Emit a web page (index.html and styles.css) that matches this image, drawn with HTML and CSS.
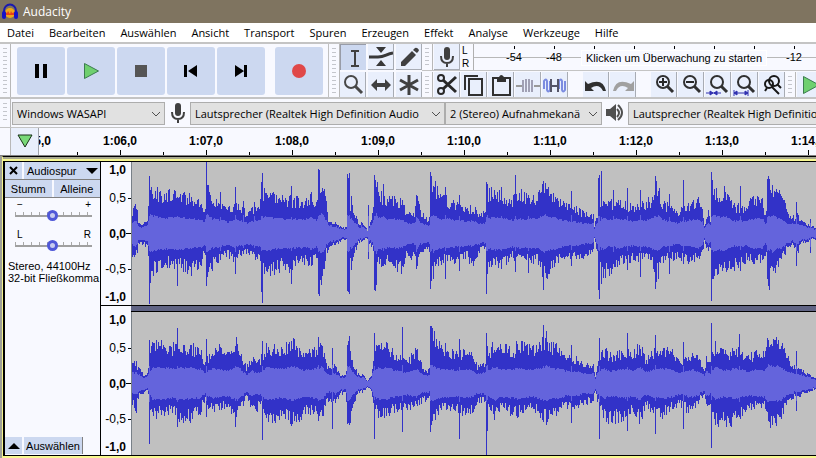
FILE: index.html
```html
<!DOCTYPE html>
<html lang="de">
<head>
<meta charset="utf-8">
<title>Audacity</title>
<link rel="stylesheet" href="styles.css">
</head>
<body>
<header class="titlebar">
  <svg class="logo" width="18" height="18" viewBox="0 0 18 18"><circle cx="9" cy="10" r="5" fill="#f0a818"/><path d="M4 9l2 1 1-2 2 3 1-3 1 2 3-1v3H4z" fill="#e8401c"/><path d="M3 11V8a6 6.500 0 0 1 12 0v3" fill="none" stroke="#1a1ab0" stroke-width="2"/><rect x="1" y="8" width="4" height="8" rx="2" fill="#1515c8"/><rect x="13" y="8" width="4" height="8" rx="2" fill="#1515c8"/></svg>
  <span>Audacity</span>
</header>
<nav class="menu">
  <a href="#">Datei</a><a href="#">Bearbeiten</a><a href="#">Auswählen</a><a href="#">Ansicht</a><a href="#">Transport</a><a href="#">Spuren</a><a href="#">Erzeugen</a><a href="#">Effekt</a><a href="#">Analyse</a><a href="#">Werkzeuge</a><a href="#">Hilfe</a>
</nav>
<section class="toolbars">
  <div class="grip"></div>
  <div class="transport">
    <button aria-label="Pause"><svg width="48" height="48"><path d="M18 17h4v14h-4zM26 17h4v14h-4z"/></svg></button>
    <button aria-label="Wiedergabe"><svg width="48" height="48"><path d="M17.500 16.500v15l14-7.500z" fill="#6fd06f" stroke="#3c7c50"/></svg></button>
    <button aria-label="Stopp"><svg width="48" height="48"><path d="M18 18h12v12H18z" fill="#555"/></svg></button>
    <button aria-label="Anfang"><svg width="48" height="48"><path d="M17 18h3v12h-3zM30 18v12l-9-6z"/></svg></button>
    <button aria-label="Ende"><svg width="48" height="48"><path d="M27 18h3v12h-3zM18 18v12l9-6z"/></svg></button>
    <button class="record" aria-label="Aufnahme"><svg width="48" height="48"><circle cx="24" cy="24" r="7" fill="#e04848"/></svg></button>
  </div>
  <div class="grip"></div>
  <div class="tools">
    <button class="active" aria-label="Auswahl"><svg width="26" height="26"><path d="M10 6h8M10 21h8M14 6v15" fill="none" stroke="#404040" stroke-width="2"/></svg></button>
    <button aria-label="Hüllkurve"><svg width="26" height="26"><path d="M1 13h9c7 0 8-3 15-4" fill="none" stroke="#383838" stroke-width="3"/><path d="M8 3h10l-5 6zM8 22h10l-5-6z" fill="#383838"/></svg></button>
    <button aria-label="Zeichnen"><svg width="26" height="26"><path d="M5 18L16 7l4 4L9 22H5zM17 6l2-2q2-1 4 2 0 1-2 3z" fill="#404040"/></svg></button>
    <button aria-label="Zoom"><svg width="26" height="26"><circle cx="11" cy="10" r="6" fill="none" stroke="#484848" stroke-width="2"/><path d="M15 14l7 7" stroke="#484848" stroke-width="3"/></svg></button>
    <button aria-label="Verschieben"><svg width="26" height="26"><path d="M3 13l6-6v4h8V7l6 6-6 6v-4H9v4z" fill="#404040"/></svg></button>
    <button aria-label="Multi"><svg width="26" height="26"><path d="M13 3v20M4 8l18 10M22 8L4 18" stroke="#404040" stroke-width="3"/></svg></button>
  </div>
  <div class="stack">
    <div class="line meterline">
      <div class="grip"></div>
      <button class="sm" aria-label="Aufnahmepegel"><svg width="26" height="26"><use href="#mic"/></svg></button>
      <div class="lr"><span>L</span><span>R</span></div>
      <div class="meter">
        <div class="db tick"><span>-54</span></div><div class="db tick"><span>-48</span></div><div class="db tick"></div><div class="db tick"></div><div class="db tick"></div><div class="db tick"></div><div class="db tick"></div><div class="db tick"><span>-12</span></div><div class="db tick"></div>
        <span class="hint">Klicken um Überwachung zu starten</span>
      </div>
    </div>
    <div class="line editline">
      <div class="grip"></div>
      <div class="group">
      <button class="sm" aria-label="Ausschneiden"><svg width="26" height="26"><g fill="none" stroke="#282828"><circle cx="7" cy="6" r="3" stroke-width="2"/><circle cx="7" cy="19" r="3" stroke-width="2"/><path d="M9 8l13 12M9 17L22 5" stroke-width="3"/></g></svg></button>
      <button class="sm" aria-label="Kopieren"><svg width="26" height="26"><path d="M4 18V4h13M8 7h13v16H8z" fill="none" stroke="#303030" stroke-width="2"/></svg></button>
      <button class="sm" aria-label="Einfügen"><svg width="26" height="26"><path d="M5 6h17v17H5z" fill="none" stroke="#303030" stroke-width="2"/><path d="M9 5h2q2-4 5 0h2v5H9z" fill="#303030"/></svg></button>
      <button class="sm" aria-label="Zuschneiden"><svg width="26" height="26"><path d="M1 14h7M19 14h6" stroke="#999" stroke-width="2"/><path d="M8 8v12M11 7v13M14 7v13M17 8v12" stroke="#a0a0b4" stroke-width="2"/></svg></button>
      <button class="sm" aria-label="Stille"><svg width="26" height="26"><path d="M2 17V9q2-3 3 0v9q1 3 3 0V9M17 17V9q2-3 3 0v9q1 3 3 0V9" fill="none" stroke="#7c8ce0" stroke-width="2"/><path d="M9 14h7M9 7v13M16 7v13" stroke="#555568" stroke-width="2"/></svg></button>
      </div>
      <div class="group">
      <button class="sm" aria-label="Rückgängig"><svg width="26" height="26"><path d="M2 9v10h9l-3-3q8-5 12 3h3Q20 5 5 12z" fill="#303030"/></svg></button>
      <button class="sm" aria-label="Wiederholen"><svg width="26" height="26"><path d="M24 9v10h-9l3-3Q10 11 6 19H3Q6 5 21 12z" fill="#a0a0a0"/></svg></button>
      </div>
      <div class="group">
      <button class="sm" aria-label="Vergrößern"><svg width="26" height="26"><use href="#lens"/><path d="M8 10h8M12 6v8" stroke="#282828" stroke-width="2"/></svg></button>
      <button class="sm" aria-label="Verkleinern"><svg width="26" height="26"><use href="#lens"/><path d="M8 10h8" stroke="#282828" stroke-width="2"/></svg></button>
      <button class="sm" aria-label="Auswahl einpassen"><svg width="26" height="26"><use href="#lens"/><path d="M1 21h15M5 19l3 2-3 2zM12 19l-3 2 3 2z" fill="#3030b0" stroke="#3030b0"/></svg></button>
      <button class="sm" aria-label="Projekt einpassen"><svg width="26" height="26"><use href="#lens"/><path d="M2 21h14M2 18v6M16 18v6M5 19l-3 2 3 2zM13 19l3 2-3 2z" fill="#3030b0" stroke="#3030b0"/></svg></button>
      <button class="sm" aria-label="Zoom umschalten"><svg width="26" height="26"><g fill="none" stroke="#181818" stroke-width="2"><circle cx="15" cy="9" r="5"/><circle cx="10" cy="12" r="4"/><path d="M18 12l4 4M13 15l7 7M8 16l-2 3"/></g></svg></button>
      </div>
      <div class="grip"></div>
      <button class="sm" aria-label="Abspielen"><svg width="26" height="26"><path d="M6.500 4.500v17L22 13z" fill="#6fd06f" stroke="#3c7c50"/></svg></button>
    </div>
  </div>
</section>
<section class="devices">
  <div class="grip"></div>
  <div class="pick host"><select aria-label="Audio-Host"><option>Windows WASAPI</option></select><svg width="10" height="6"><path d="M1 1l4 4 4-4"/></svg></div>
  <svg class="dev" width="26" height="26"><use href="#mic"/></svg>
  <div class="pick input"><select aria-label="Aufnahmegerät"><option>Lautsprecher (Realtek High Definition Audio</option></select><svg width="10" height="6"><path d="M1 1l4 4 4-4"/></svg></div>
  <div class="pick chans"><select aria-label="Aufnahmekanäle"><option>2 (Stereo) Aufnahmekanä</option></select><svg width="10" height="6"><path d="M1 1l4 4 4-4"/></svg></div>
  <svg class="dev" width="26" height="26"><path d="M4 9h4l6-5v17l-6-5H4z" fill="#505050"/><path d="M15 9q4 4 0 8M16 5q8 8 0 15" fill="none" stroke="#505050" stroke-width="2"/></svg>
  <div class="pick output"><select aria-label="Wiedergabegerät"><option>Lautsprecher (Realtek High Definition Audio)</option></select></div>
</section>
<section class="timeline">
  <div class="gutter"></div>
  <button class="pin" aria-label="Abspielkopf"><svg width="16" height="14"><path d="M1 1h14L8 13z" fill="#78d878" stroke="#183018"/></svg></button>
  <div class="scale"><div class="marks">
    <span>1:05,0</span><span>1:06,0</span><span>1:07,0</span><span>1:08,0</span><span>1:09,0</span><span>1:10,0</span><span>1:11,0</span><span>1:12,0</span><span>1:13,0</span><span>1:14,0</span>
  </div></div>
</section>
<main class="tracks">
  <aside class="panel">
    <div class="row"><button class="close" aria-label="Schließen"><svg width="9" height="9"><path d="M1 1l7 7M8 1L1 8" stroke="#000" stroke-width="2"/></svg></button><button class="name">Audiospur<svg width="12" height="6"><path d="M0 0h12L6 6z"/></svg></button></div>
    <div class="row"><button class="half">Stumm</button><button class="half">Alleine</button></div>
    <div class="slide"><div class="ends"><span>−</span><span>+</span></div><input type="range" aria-label="Lautstärke" value="49"></div>
    <div class="slide"><div class="ends"><span>L</span><span>R</span></div><input type="range" aria-label="Balance" value="49"></div>
    <p class="info">Stereo, 44100Hz<br>32-bit Fließkomma</p>
    <div class="row foot"><button class="close" aria-label="Einklappen"><svg width="12" height="6"><path d="M0 6h12L6 0z"/></svg></button><button class="choose">Auswählen</button></div>
  </aside>
  <div class="channels">
    <div class="channel">
      <div class="vr"><b>1,0</b><span>0,5</span><b>0,0</b><span>-0,5</span><b>-1,0</b></div>
      <svg class="wave" id="left"></svg>
    </div>
    <div class="divider"><i></i></div>
    <div class="channel">
      <div class="vr"><b>1,0</b><span>0,5</span><b>0,0</b><span>-0,5</span><b>-1,0</b></div>
      <svg class="wave" id="right"></svg>
    </div>
  </div>
</main>
<svg class="defs" width="0" height="0">
  <defs>
    <g id="mic"><rect x="10" y="3" width="6" height="13" rx="3" fill="#404040"/><path d="M7 12q0 7 6 7t6-7M13 19v4" fill="none" stroke="#404040" stroke-width="2"/></g>
    <g id="lens" fill="none" stroke="#303030"><circle cx="12" cy="10" r="6" stroke-width="2"/><path d="M16 14l6 6" stroke-width="3"/></g>
  </defs>
</svg>
<script src="wave.js"></script>
</body>
</html>
```
FILE: styles.css
```css
* { box-sizing: border-box; }
body { margin: 0; height: 100vh; overflow: hidden; display: flex; flex-direction: column; background: #f8f9ff; color: #000; font: 12px "Open Sans", sans-serif; }
button { border: 0; padding: 0; margin: 0; background: #ccd8f0; font: inherit; color: inherit; display: flex; align-items: center; justify-content: center; flex: none; }
svg { display: block; flex: none; }
.defs { position: absolute; }

.titlebar { height: 23px; flex: none; background: #7f7460; color: #fff; display: flex; align-items: center; gap: 4px; padding-left: 1px; }
.menu { height: 19px; flex: none; background: #fff; display: flex; align-items: center; gap: 15px; padding-left: 7px; font-size: 11px; }
.menu a { color: #000; text-decoration: none; }

.toolbars { height: 57px; flex: none; display: flex; border-top: 2px solid #c4c4c4; border-bottom: 2px solid #c4c4c4; overflow: hidden; }
.grip { width: 11px; flex: none; border-right: 1px solid #b8b8b8; padding: 4px 3px; background: repeating-linear-gradient(#c4c6cc 0 1px, transparent 1px 4px) content-box; }
.transport { display: flex; gap: 2px; padding: 3px 5px 0 6px; border-right: 1px solid #c0c0c0; flex: none; }
.transport button { width: 48px; height: 48px; border-radius: 3px; }
.transport .record { margin-left: 8px; }
.tools { display: grid; grid-template-columns: repeat(3, 26px); grid-auto-rows: 26px; gap: 2px; flex: none; }
.tools button, .sm { background: #e9effc; border-right: 1px solid #a8acb4; border-bottom: 1px solid #a8acb4; height: 26px; overflow: hidden; }
.tools .active { background: #ccd8f0; border: 1px solid #989ca8; border-right: 0; border-bottom: 0; }
.stack { flex: 1; min-width: 0; display: flex; flex-direction: column; gap: 1px; }
.line { display: flex; height: 27px; min-width: 0; }
.line > .sm, .group { margin-left: 1px; }
.sm { width: 26px; }
.group { display: flex; gap: 1px; }
.group + .group { margin-left: 15px; }
.meterline { border-bottom: 1px solid #c4c4c4; }
.lr { width: 11px; margin-left: 2px; display: flex; flex-direction: column; font: 10px/13px "Liberation Sans", sans-serif; }
.meter { position: relative; flex: 1; min-width: 0; overflow: hidden; display: flex; padding-left: 20px; border-left: 1px solid #b0b0b0; background: linear-gradient(transparent 13px, #b8b8b8 13px 14px, transparent 14px); font: 11px/14px "Liberation Sans", sans-serif; }
.db { width: 40px; flex: none; display: flex; justify-content: center; padding-top: 6px; background: linear-gradient(#000, #000) center 2px / 1px 3px no-repeat; }
.db span { height: 14px; }
.hint { position: absolute; left: 107px; top: 6px; padding: 0 4px; background: #f8f9ff; border: 1px solid #fff; white-space: nowrap; line-height: 14px; }

.devices { height: 29px; flex: none; display: flex; align-items: center; border-bottom: 1px solid #c4c4c4; overflow: hidden; font-size: 11px; }
.devices .grip { height: 28px; }
.pick { position: relative; flex: none; margin-left: 1px; }
.pick select { appearance: none; width: 100%; height: 23px; margin: 0; padding: 0 0 0 4px; border: 1px solid #adadad; border-radius: 0; background: #e1e1e1; color: #000; font: inherit; display: block; }
.pick svg { position: absolute; right: 4px; top: 9px; fill: none; stroke: #505050; pointer-events: none; }
.host { width: 153px; }
.input { width: 255px; margin-left: 0; }
.chans { width: 157px; margin-left: 0; }
.output { flex: 1 0 250px; }
.dev { margin: 0 -1px 0 0; }

.timeline { height: 28px; flex: none; display: flex; border-bottom: 1px solid #808080; }
.gutter { width: 11px; border-right: 1px solid #b8b8b8; }
.pin { width: 28px; background: #e9effc; border-right: 1px solid #a0a4ac; padding-bottom: 2px; }
.scale { flex: 1; min-width: 0; overflow: hidden; }
.marks { display: flex; margin-left: -48px; height: 27px; font: bold 12px/26px "Liberation Sans", sans-serif; }
.marks span { width: 86px; flex: none; text-align: center; background: linear-gradient(#000, #000) center bottom / 1px 5px no-repeat, linear-gradient(#000, #000) left bottom / 1px 3px no-repeat; }

.tracks { flex: 1 0 auto; display: flex; margin-left: 2px; border-top: 1px solid #000; border-left: 1px solid #f4f48c; box-shadow: -2px 0 #a0a098; font: 11px/12px "Liberation Sans", sans-serif; background: linear-gradient(#a8a890 0 2px, #f8f890 2px 4px, #000 4px 5px, #f8f890 5px); padding-top: 5px; }
.panel { width: 98px; flex: none; height: 294px; display: flex; flex-direction: column; background: #f8f9ff; border: solid #000; border-width: 0 1px 1px 2px; }
.row { display: flex; gap: 2px; height: 18px; border-bottom: 1px solid #808080; }
.row button { height: 17px; }
.row .close { width: 17px; }
.row .name { flex: 1; justify-content: space-between; padding: 0 2px 0 3px; }
.row .half { flex: 1; }
.slide { padding: 2px 7px 0 10px; height: 30px; }
.ends { display: flex; justify-content: space-between; height: 8px; line-height: 10px; font-size: 10px; padding: 0 2px; }
.slide input { appearance: none; display: block; width: 77px; height: 13px; margin: 0; background: linear-gradient(#a0a0a0, #a0a0a0) 0 7px / 100% 2px no-repeat, repeating-linear-gradient(90deg, #a8a8a8 0 1px, transparent 1px 8px) 0 4px / 100% 3px no-repeat; }
.slide input::-webkit-slider-thumb { appearance: none; width: 11px; height: 11px; margin-top: 1px; border-radius: 50%; border: 3px solid #5058d8; background: #c8ccf0; }
.info { margin: 2px 3px; white-space: nowrap; }
.foot { margin-top: auto; border-bottom: 0; }
.row .choose { width: 59px; border-right: 1px solid #808080; }
.channels { flex: 1; min-width: 0; border-bottom: 1px solid #000; height: 294px; }
.channel { display: flex; height: 143px; }
.vr { width: 30px; flex: none; padding-right: 5px; display: grid; grid-template-rows: 16px 40px 31px 40px 16px; align-items: center; text-align: right; font-size: 12px; background: linear-gradient(#000, #000) right 36px / 3px 1px no-repeat, linear-gradient(#000, #000) right 71px / 5px 1px no-repeat, linear-gradient(#000, #000) right 107px / 3px 1px no-repeat, #f8f9ff; }
.wave { flex: 1; min-width: 0; height: 143px; background: #c0c0c0; border-left: 1px solid #788088; }
.divider { height: 7px; display: flex; background: #f8f9ff; border-top: 1px solid #000; }
.divider i { flex: 1; margin-left: 30px; background: #606484; border-bottom: 1px solid #000; }
```
FILE: wave.js
```js
// Each entry is "x up down": the envelope in pixels from the centre line.
// A leading "!" marks a single peak on top of the envelope.
const channels = {
  left: `0 22 20,3 27 26,5 20 18,6 9 9,10 8 10,15 13 12,!17 57 70,18 45 48,22 42 36,30 40 30,40 37 30,!45 36 52,50 37 33,60 33 37,66 30 33,70 27 27,72 20 18,!74 71 52,75 47 42,77 40 36,80 33 33,86 30 27,!88 41 26,92 25 22,95 22 20,100 27 27,!103 46 40,106 30 22,!111 32 20,115 18 18,120 24 22,!122 31 20,127 27 25,!130 60 69,!129 51 58,133 43 43,140 36 38,150 33 32,!159 47 50,158 33 35,165 32 28,172 30 27,179 37 32,184 30 22,!186 64 60,!187 63 62,189 48 45,192 42 35,194 28 20,196 14 15,200 11 12,206 8 10,212 5 5,214 6 6,!215 59 57,!217 60 60,!216 55 58,219 35 33,222 22 20,226 10 10,230 10 7,235 3 5,!236 28 25,240 18 15,!242 58 56,!243 53 57,244 50 45,246 42 30,250 36 32,!251 49 32,256 33 24,264 33 33,270 30 35,275 18 20,282 20 25,!284 38 35,285 34 33,288 20 20,296 12 15,297 17 17,!298 61 55,!299 57 47,301 50 40,306 38 28,312 35 25,!313 46 45,320 30 28,!327 38 37,333 25 22,341 25 30,348 18 15,353 20 15,!354 51 60,!355 49 40,357 40 30,366 40 32,!369 46 35,375 33 27,380 33 22,!383 58 38,387 38 27,396 37 25,!396 38 39,405 37 27,!410 49 43,!411 52 56,413 45 42,418 38 35,425 37 27,430 28 22,438 25 23,!439 42 32,447 22 23,455 18 22,461 17 15,462 8 5,465 18 18,!466 55 56,!467 58 65,!469 62 50,471 37 42,476 28 38,!481 43 30,486 32 30,!495 45 36,500 25 25,!508 43 43,512 28 25,518 33 27,!523 57 55,!524 52 48,526 43 40,530 30 27,!537 39 40,545 20 22,!551 53 30,556 28 27,566 32 27,570 23 20,572 8 8,576 20 18,578 14 12,!579 61 67,!580 53 45,581 45 45,587 38 35,593 42 35,600 27 33,!608 47 37,614 25 25,620 33 27,630 33 27,633 18 20,!635 54 45,!636 57 52,!637 54 56,640 45 42,645 42 30,652 37 22,655 20 12,662 16 12,!664 31 32,665 20 22,668 12 10,675 9 8,!678 14 19,683 5 5`,
  right: `0 20 22,4 19 25,6 15 13,12 7 9,15 9 8,!17 43 60,20 38 33,30 38 30,40 35 27,!45 55 43,50 37 37,60 35 33,68 32 27,72 20 17,!74 44 33,80 33 28,88 35 23,95 27 22,!103 37 43,105 41 32,110 25 22,114 15 15,120 25 22,125 20 25,128 23 20,!130 42 56,135 38 37,145 33 35,153 35 33,161 40 38,170 30 30,178 30 28,!186 46 37,190 38 33,194 20 17,197 13 15,!200 35 45,203 18 18,208 8 10,213 7 8,!215 38 40,!216 42 39,217 43 40,220 22 22,225 10 10,232 7 7,235 2 3,239 7 6,241 25 20,!242 50 55,246 42 30,252 40 30,260 30 27,!270 56 48,275 22 23,284 32 23,290 15 17,297 13 15,!298 57 48,!299 57 41,300 50 38,305 38 27,315 35 25,322 28 23,!327 44 55,333 30 30,341 27 25,345 17 17,352 20 18,!354 50 71,!355 37 47,357 32 23,362 38 33,368 37 25,375 40 25,380 27 30,385 40 30,392 38 25,400 33 23,!411 58 38,!414 52 41,415 43 35,420 36 27,426 38 28,433 25 22,!439 38 39,445 24 22,452 18 20,461 17 15,463 7 6,465 20 18,!467 45 55,471 33 32,478 27 37,485 28 35,494 32 35,!495 50 47,500 27 25,508 38 38,513 22 22,520 30 25,!523 48 50,528 33 32,537 34 25,547 20 20,!551 41 45,556 28 28,565 28 20,572 12 10,574 24 22,578 20 20,!579 60 64,583 37 37,590 30 38,598 30 45,603 35 35,!607 49 33,614 25 27,622 28 23,632 30 22,636 45 40,642 40 42,649 43 33,653 27 20,662 16 12,!664 32 27,668 13 12,675 9 8,683 5 5`
};

const centre = 71;
let seed = 7;
const noise = () => (seed = (seed * 16807) % 2147483647) / 2147483647;

function columns(text) {
  const base = [], peaks = {};
  for (const item of text.split(",")) {
    const peak = item[0] === "!";
    const p = item.replace("!", "").split(" ").map(Number);
    if (peak) peaks[p[0]] = p; else base.push(p);
  }
  base.sort((a, b) => a[0] - b[0]);
  const out = [];
  for (let x = 0; x < 684; x++) {
    let i = 0;
    while (i < base.length - 2 && base[i + 1][0] <= x) i++;
    const a = base[i], b = base[i + 1];
    const t = Math.min(1, (x - a[0]) / (b[0] - a[0]));
    let up = a[1] + (b[1] - a[1]) * t, down = a[2] + (b[2] - a[2]) * t;
    const near = peaks[x];
    let rms = Math.min(up, down + 6) * 0.31 + 3;
    if (near) rms = Math.max(rms, 16);
    const u = near ? near[1] : up * (0.76 + 0.4 * noise());
    const d = near ? near[2] : down * (0.72 + 0.44 * noise());
    out.push([u, d, Math.min(rms + noise() * 2, u * 0.7), Math.min(rms + noise() * 2, d * 0.7)]);
  }
  return out;
}

function outline(cols, u, d) {
  return cols.map((c, x) => {
    const top = Math.round(c[u]), bottom = Math.round(c[d]);
    return `M${x} ${centre - top}h1v${top + bottom + 1}h-1z`;
  }).join("");
}

for (const id in channels) {
  const cols = columns(channels[id]);
  [["#3232c8", 0, 1], ["#6464dc", 2, 3]].forEach(([fill, u, d]) => {
    const path = document.createElementNS("http://www.w3.org/2000/svg", "path");
    path.setAttribute("fill", fill);
    path.setAttribute("shape-rendering", "crispEdges");
    path.setAttribute("d", outline(cols, u, d));
    document.getElementById(id).append(path);
  });
}
```
